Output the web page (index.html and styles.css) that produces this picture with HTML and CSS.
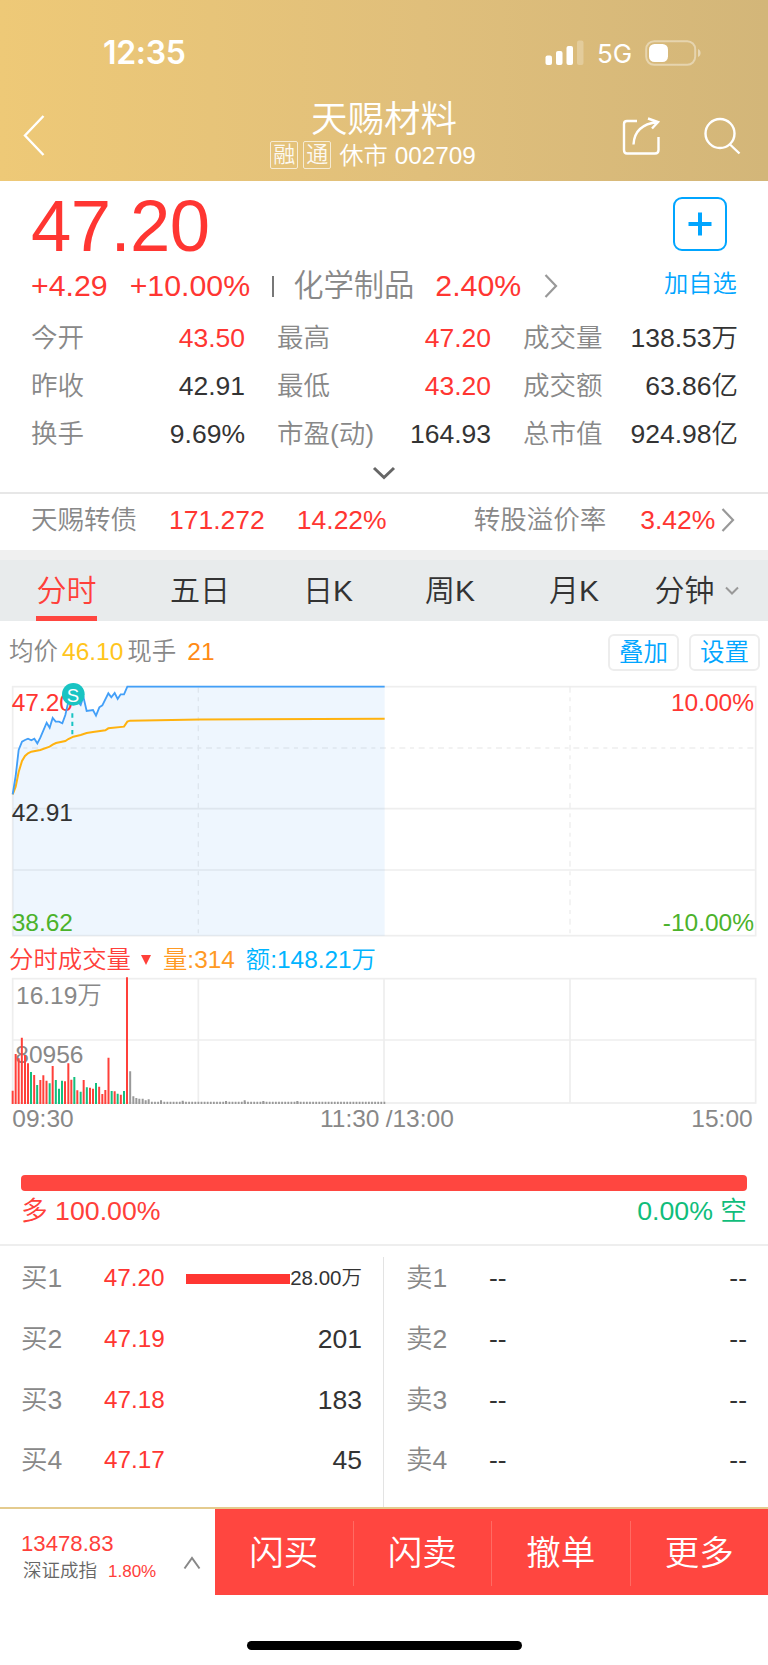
FILE: index.html
```html
<!DOCTYPE html>
<html lang="zh-CN">
<head>
  <meta charset="UTF-8" />
  <meta name="viewport" content="width=device-width, initial-scale=1.0" />
  <title>天赐材料 002709</title>
  <link rel="stylesheet" href="styles.css">
</head>
<body>
  <header class="header">
    <div class="status-bar">
      <span class="time">12:35</span>
      <svg class="signal" width="40" height="26" viewBox="0 0 40 26" fill="#fff">
        <rect x="0.5" y="15.5" width="6.5" height="9.5" rx="2" />
        <rect x="11" y="11" width="6.5" height="14" rx="2" />
        <rect x="21.5" y="6" width="6.5" height="19" rx="2" />
        <rect x="32" y="0.5" width="6.5" height="24.5" rx="2" opacity="0.25" />
      </svg>
      <span class="network">5G</span>
      <svg class="battery" width="58" height="28" viewBox="0 0 58 28">
        <rect x="1.2" y="2.2" width="49" height="23.6" rx="8" fill="none" stroke="#fff" stroke-width="2" opacity="0.4" />
        <path d="M53 10c3.4 1.2 3.4 6.8 0 8z" fill="#fff" opacity="0.45" />
        <rect x="4" y="5" width="19" height="18" rx="5.5" fill="#fff" />
      </svg>
    </div>
    <div class="nav">
      <svg class="nav-back" width="24" height="44" viewBox="0 0 24 44"><path d="M21.500 2L3 21.500L21.500 41" /></svg>
      <div class="nav-title">
        <h1>天赐材料</h1>
        <p><span class="mark">融</span><span class="mark">通</span><span class="state">休市 002709</span></p>
      </div>
      <svg class="nav-share" width="42" height="42" viewBox="0 0 42 42">
        <path d="M17 5H7Q4 5 4 8V34Q4 37.500 7 37.500H35Q38.500 37.500 38.500 34V21" />
        <path d="M13.500 28.500C14 17 21 8 37.500 6M28 2.500L38 6L32 12.500" />
      </svg>
      <svg class="nav-search" width="40" height="42" viewBox="0 0 40 42"><circle cx="17" cy="17.500" r="14.500" /><path d="M26.500 28L36.500 37.500" /></svg>
    </div>
  </header>

  <section class="quote">
    <div class="quote-top">
      <div class="quote-main">
        <div class="price">47.20</div>
        <div class="change">
          <span class="red">+4.29</span><span class="red percent">+10.00%</span><i class="bar"></i><span class="sector">化学制品</span><span class="red">2.40%</span>
          <svg class="arrow" width="14" height="26" viewBox="0 0 14 26"><path d="M1.500 2L12 13L1.500 24" /></svg>
        </div>
      </div>
      <div class="add">
        <div class="add-box"><svg width="24" height="24" viewBox="0 0 24 24"><path d="M12 0.500V23.500M0.500 12H23.500" stroke="#00a5ff" stroke-width="4" /></svg></div>
        <span>加自选</span>
      </div>
    </div>
    <div class="stats">
      <div><span>今开</span><b class="red">43.50</b></div>
      <div><span>最高</span><b class="red">47.20</b></div>
      <div><span>成交量</span><b>138.53万</b></div>
      <div><span>昨收</span><b>42.91</b></div>
      <div><span>最低</span><b class="red">43.20</b></div>
      <div><span>成交额</span><b>63.86亿</b></div>
      <div><span>换手</span><b>9.69%</b></div>
      <div><span>市盈(动)</span><b>164.93</b></div>
      <div><span>总市值</span><b>924.98亿</b></div>
    </div>
    <svg class="expand" width="24" height="14" viewBox="0 0 24 14"><path d="M2 2L12 11.500L22 2" /></svg>
  </section>

  <section class="bond">
    <span class="bond-name">天赐转债</span><span class="bond-price red">171.272</span><span class="red">14.22%</span>
    <span class="bond-label">转股溢价率</span><span class="red">3.42%</span>
    <svg class="arrow" width="14" height="26" viewBox="0 0 14 26"><path d="M1.500 2L12 13L1.500 24" /></svg>
  </section>

  <nav class="tabs">
    <span class="active">分时</span>
    <span>五日</span>
    <span>日K</span>
    <span>周K</span>
    <span>月K</span>
    <span>分钟<svg width="16" height="10" viewBox="0 0 16 10"><path d="M2 1.500L8 7.500L14 1.500" /></svg></span>
  </nav>

  <section class="average">
    <span>均价</span><span class="yellow">46.10</span><span>现手</span><span class="orange">21</span>
    <button class="first">叠加</button>
    <button>设置</button>
  </section>

  <!-- price line, 3 units per pixel -->
  <svg class="price-chart" width="768" height="260" viewBox="0 30 2304 780">
    <g class="grid">
      <rect x="38" y="50" width="2229" height="747" />
      <path d="M38 416H2267M38 600H2267" />
      <path class="dash" d="M38 234H2267M595 50V797M1710 50V797" />
    </g>
    <path class="area" d="M38 373L47 318L56 240L66 215L84 206L94 211L103 206L112 220L121 203L140 158L149 173L158 144L167 155L187 160L196 135L205 95L220 80L242 105L250 80L260 123L279 120L288 137L298 112L307 106L325 70L334 82L344 69L353 87L362 73L372 73L382 50H1154V797H38Z" />
    <path class="avg-line" d="M38 373L47 350L56 306L66 273L75 258L84 250L94 245L121 240L149 230L158 224L168 219L196 213L205 207L220 200L242 195L260 189L279 186L316 181L325 175L372 170L382 155L390 152L600 148.500L1154 146" />
    <text class="red" x="35" y="122">47.20</text>
    <text class="dark" x="35" y="452">42.91</text>
    <text class="green" x="35" y="782">38.62</text>
    <text class="red" x="2262" y="122" text-anchor="end">10.00%</text>
    <text class="green" x="2262" y="782" text-anchor="end">-10.00%</text>
    <path class="price-line" d="M38 373L47 318L56 240L66 215L75 210L84 206L94 211L103 206L112 220L121 203L140 158L149 173L158 144L167 155L177 155L187 160L196 135L205 95L220 80L242 105L250 80L260 123L279 120L288 137L298 112L307 106L325 70L334 82L344 69L353 87L362 73L372 73L382 50H1154" />
    <path class="sell-line" d="M217 130V194" />
    <circle cx="220" cy="73" r="34" fill="#19c4c3" />
    <text class="sell" x="219" y="95" text-anchor="middle">S</text>
  </svg>

  <div class="volume-title">
    <span class="title">分时成交量</span><i></i><span class="amount">量:314</span><span class="money">额:148.21万</span>
  </div>

  <!-- volume bars, 3 units per pixel -->
  <svg class="volume-chart" width="768" height="160" viewBox="0 117 2304 480">
    <g class="grid">
      <rect x="38" y="131" width="2229" height="373" />
      <path d="M38 315H2267M595 131V504M1152 131V504M1710 131V504" />
    </g>
    <text x="48" y="208">16.19万</text>
    <text x="46" y="384">80956</text>
    <g class="volume">
      <path stroke="#ff403a" d="M38 507V467M47 507V357M56 507V370M65.500 507V308M75 507V360M84 507V385M102.500 507V420M121 507V435M130 507V421M139.500 507V437M158 507V393M195 507V439M205 507V385M214 507V434M232 507V466M251 507V435M270 507V458M279 507V461M297.500 507V455M307 507V477M316 507V465M325.500 507V368M344 507V469M362.500 507V479M381 507V127" />
      <path stroke="#14bf7e" d="M93 507V411M111.500 507V450M149 507V445M167.500 507V435M177 507V461M186 507V437M223 507V426M242 507V470M260.500 507V457M288 507V444M335 507V468M353 507V476M372 507V468" />
      <path stroke="#999" d="M390.500 507V409M400 507V484M409 507V489M418 507V491M428 507V491M437 507V496M446 507V493M483 507V496M548 507V497M678 507V498M734 507V496M790 507V498M892 507V498" />
      <path class="quiet" d="M453 503.500H1157" />
    </g>
    <text x="37" y="575">09:30</text>
    <text x="960" y="575">11:30</text>
    <text x="1157" y="575">/13:00</text>
    <text x="2258" y="575" text-anchor="end">15:00</text>
  </svg>

  <section class="ratio">
    <div class="ratio-bar"></div>
    <div class="ratio-text"><span>多 100.00%</span><span class="short">0.00% 空</span></div>
  </section>

  <section class="depth">
    <div class="buy">
      <div class="level"><span>买1</span><b>47.20</b><i></i><em class="small">28.00万</em></div>
      <div class="level"><span>买2</span><b>47.19</b><em>201</em></div>
      <div class="level"><span>买3</span><b>47.18</b><em>183</em></div>
      <div class="level"><span>买4</span><b>47.17</b><em>45</em></div>
    </div>
    <div class="sell-side">
      <div class="level"><span>卖1</span><b>--</b><em>--</em></div>
      <div class="level"><span>卖2</span><b>--</b><em>--</em></div>
      <div class="level"><span>卖3</span><b>--</b><em>--</em></div>
      <div class="level"><span>卖4</span><b>--</b><em>--</em></div>
    </div>
  </section>

  <footer class="footer">
    <div class="index">
      <div>
        <div class="index-value">13478.83</div>
        <div class="index-name">深证成指<span>1.80%</span></div>
      </div>
      <svg width="18" height="14" viewBox="0 0 18 14"><path d="M1.500 12.500L9 2L16.500 12.500" /></svg>
    </div>
    <div class="actions">
      <span>闪买</span><span>闪卖</span><span>撤单</span><span>更多</span>
    </div>
  </footer>
  <div class="home-bar"></div>
</body>
</html>
```

FILE: styles.css
```css
*, *::before, *::after { box-sizing: border-box; }
body { width: 768px; height: 1665px; margin: 0; overflow: hidden; background: #fff; color: #333; font-family: "Liberation Sans", "Noto Sans CJK SC", sans-serif; font-weight: 350; }
svg { display: block; flex: none; fill: none; }
b, i, em { font-weight: inherit; font-style: normal; }
span, em { white-space: nowrap; }
.red { color: #ff3632; fill: #ff3632; }

/* Header */
.header { height: 181px; background: linear-gradient(90deg, #eec977, #e0bf7b 55%, #d3b679); color: #fff; }
.status-bar { display: flex; align-items: center; height: 104px; padding-left: 103px; padding-top: 1px; }
.time { width: 442px; font: 600 32px/40px Inter, sans-serif; padding-top: 1px; letter-spacing: -0.3px; }
.signal { fill: #fff; }
.network { margin-left: 12px; width: 48px; font: 400 26px/40px Inter, sans-serif; padding-top: 2px; }
.nav { display: flex; align-items: flex-start; height: 77px; padding-left: 22px; }
.nav svg { stroke: #fff; stroke-width: 2.4; }
.nav-back { margin-top: 10px; }
.nav-title { width: 430px; margin-left: 123px; margin-right: 21px; text-align: center; }
h1 { margin: -6px 0 0; font-size: 36.5px; line-height: 43px; font-weight: 350; }
.nav-title p { display: flex; justify-content: center; align-items: center; margin: -1px 22px 0 0; height: 30px; font-size: 24.3px; line-height: 30px; }
.mark { width: 28px; height: 28px; margin-right: 5px; border: 1.5px solid rgba(255,255,255,.75); border-radius: 2px; font-size: 22px; line-height: 25px; opacity: .9; }
.state { margin-left: 3px; padding-top: 1px; }
.nav-share { margin-top: 12px; }
.nav-search { margin: 12px 0 0 41px; }

/* Quote */
.quote { height: 311px; padding: 6px 31px 0; }
.quote-top { display: flex; justify-content: space-between; height: 127px; }
.price { height: 76px; color: #ff3632; font-size: 72.5px; line-height: 77px; letter-spacing: -0.6px; }
.change { display: flex; align-items: center; height: 36px; margin-top: 5px; font-size: 30.3px; line-height: 36px; }
.percent { margin-left: 22px; }
.bar { width: 2px; height: 21px; margin: 0 19px 0 22px; background: #777; }
.sector { margin-right: 21px; color: #888; }
.arrow { stroke: #999; stroke-width: 2.2; }
.change .arrow { margin-left: 23px; }
.add { width: 73px; margin-top: 10px; color: #00a5ff; font-size: 24.3px; line-height: 36px; }
.add-box { display: flex; align-items: center; justify-content: center; width: 54px; height: 54px; margin: 0 0 15px 9px; border: 2px solid #00a5ff; border-radius: 9px; }
.stats { display: grid; grid-template-columns: 214px 214px 215px; column-gap: 32px; height: 144px; grid-auto-rows: 48px; width: 708px; font-size: 26.5px; line-height: 49px; }
.stats div { display: flex; justify-content: space-between; }
.stats span { color: #888; }
.expand { margin: 8px auto 0; stroke: #666; stroke-width: 3; }

/* Convertible bond */
.bond { display: flex; align-items: center; height: 58px; padding: 0 0 5px 31px; border-top: 2px solid #e7e7e7; font-size: 26.5px; line-height: 50px; color: #888; }
.bond-price { margin: 0 32px; }
.bond-label { margin: 0 34px 0 87px; }
.bond .arrow { margin-left: 6px; }

/* Period tabs */
.tabs { display: flex; height: 71px; border-top: 10px solid #f0f0f0; background: #e8ebec; font-size: 30px; line-height: 62px; }
.tabs span { display: flex; width: 124px; justify-content: center; }
.tabs span:first-child { width: 61px; margin: 0 41px 0 36px; color: #ff403a; border-bottom: 5px solid #ff4640; }
.tabs span:nth-child(3) { margin-left: 4px; }
.tabs span:nth-child(4) { margin-left: -2px; }
.tabs span:last-child { width: 84px; margin-left: 19px; align-items: center; gap: 9px; }
.tabs svg { stroke: #999; stroke-width: 2; }

.average { display: flex; align-items: center; height: 59px; padding: 3px 8px 0 9px; color: #888; font-size: 24.5px; line-height: 38px; }
.yellow { margin: 0 4px 0 4px; color: #ffc51d; }
.orange { margin-left: 11px; color: #ff8a14; }
.average button { width: 71px; height: 37px; padding: 0; border: 2px solid #ededed; border-radius: 6px; background: #fff; color: #00a5ff; font: inherit; line-height: 34px; }
.average .first { margin: 0 10px 0 auto; }

/* Charts */
.grid { stroke: #eee; stroke-width: 5; }
.dash { stroke-dasharray: 18 14 12 14; stroke-width: 4; }
.area { fill: rgba(61,153,240,.09); }
.price-line { stroke: #429ff8; stroke-width: 5.5; }
.avg-line { stroke: #ffb20f; stroke-width: 6; }
.sell-line { stroke: #19c4c3; stroke-width: 6; stroke-dasharray: 13 12; }
.price-chart text { font-size: 73.5px; }
.price-chart .dark { fill: #333; }
.price-chart .green { fill: #4bb22b; }
.price-chart .sell { fill: #fff; font-size: 56px; }
.volume-title { display: flex; align-items: center; height: 34px; padding: 6px 0 0 9px; font-size: 24.4px; line-height: 28px; }
.title { color: #ff403a; }
.volume-title i { margin: 0 12px 0 10px; border: 5px solid transparent; border-top: 10px solid #ff403a; border-bottom: 0; }
.amount { color: #ff9a24; }
.money { margin-left: 11px; color: #00b4ff; }
.volume-chart text { fill: #888; font-size: 73.5px; }
.volume { stroke-width: 6; }
.quiet { stroke: #999; stroke-width: 7; stroke-dasharray: 5.3 4; }

/* Long / short ratio */
.ratio { height: 110px; padding: 41px 21px 0; }
.ratio-bar { height: 16px; border-radius: 4px; background: #ff4640; }
.ratio-text { display: flex; justify-content: space-between; color: #ff403a; font-size: 26.7px; line-height: 41px; }
.short { color: #10bd7b; }

/* Order book */
.depth { display: flex; height: 263px; padding-top: 11px; border-top: 2px solid #eee; }
.buy { width: 384px; border-right: 1.5px solid #e3e3e3; padding: 0 21px; }
.sell-side { width: 384px; padding: 0 21px 0 22px; }
.level { display: flex; align-items: center; height: 60.7px; padding-bottom: 18px; font-size: 26.5px; line-height: 42px; }
.level span { width: 83px; color: #888; }
.buy b { color: #ff3632; font-size: 24.3px; }
.level em { margin-left: auto; }
.level i { width: 105px; height: 10px; margin: 2px 0 0 21px; background: #ff3632; }
.level .small { font-size: 20.5px; }

/* Bottom bar */
.footer { display: flex; height: 88px; border-top: 2px solid #e4cb8e; }
.index { display: flex; justify-content: space-between; width: 215px; padding: 20px 14px 0 21px; color: #ff403a; }
.index-value { font-size: 22.2px; line-height: 30px; }
.index-name { color: #666; font-size: 18.5px; line-height: 24px; padding-left: 2px; }
.index-name span { margin-left: 11px; color: #ff403a; font-size: 17px; }
.index svg { margin-top: 27px; stroke: #888; stroke-width: 2; }
.actions { display: flex; flex: 1; padding: 12px 0 9px; background: #ff4640; color: #fff; font-size: 34.5px; line-height: 64px; }
.actions span { flex: 1; text-align: center; }
.actions span + span { border-left: 1px solid #ff6b63; }
.home-bar { width: 275px; height: 9px; margin: 46px auto 0; border-radius: 5px; background: #000; }
```
